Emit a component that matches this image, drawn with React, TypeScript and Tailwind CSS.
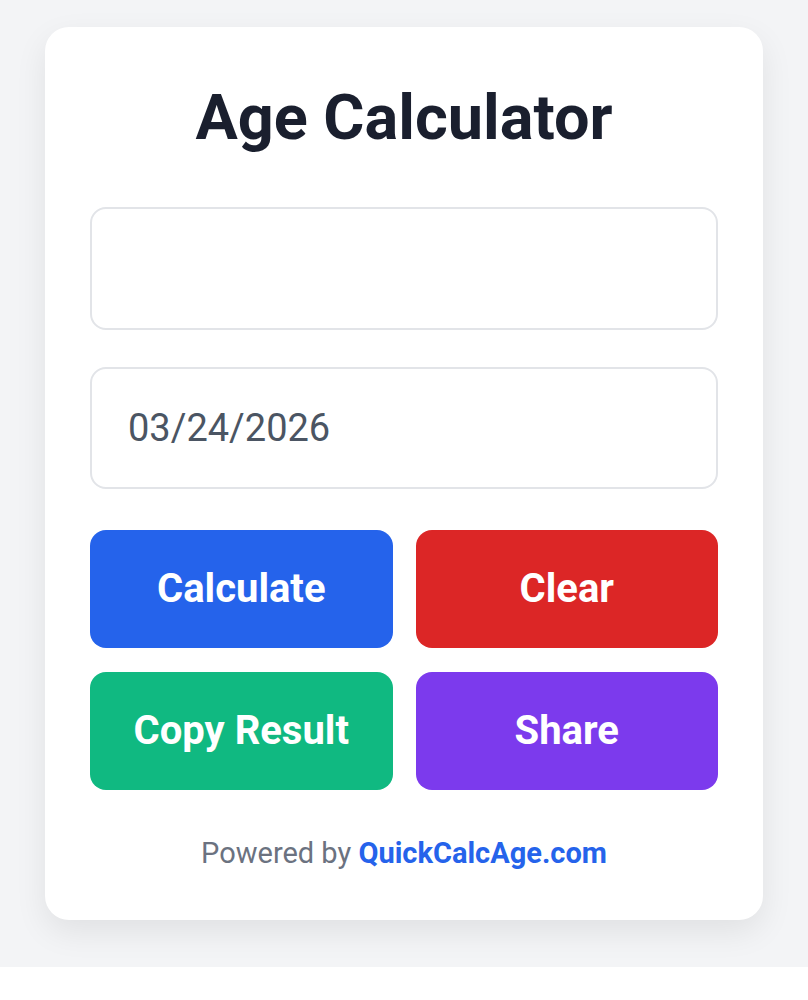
import React from 'react'

const buttons = [
  { label: 'Calculate', cls: 'bg-[#2563eb]' },
  { label: 'Clear', cls: 'bg-[#dc2626]' },
  { label: 'Copy Result', cls: 'bg-[#10b981]' },
  { label: 'Share', cls: 'bg-[#7c3aed]' },
]

export default function App() {
  return (
    <div className="min-h-[1000px] bg-white font-['Roboto','Liberation_Sans',sans-serif]">
      <div className="bg-[#f3f4f6] pt-[27px] pb-[47px]">
        <div className="mx-[45px] w-[718px] rounded-[24px] bg-white px-[45px] pt-[54px] pb-[50px] shadow-[0_12px_32px_rgba(0,0,0,0.08)]">
          <h1 className="text-center text-[63px] font-bold leading-[74px] text-[#1a1f2e]">
            Age Calculator
          </h1>

          <input
            type="text"
            readOnly
            className="mt-[52px] block h-[123px] w-full rounded-[16px] border-2 border-[#e2e4e8] bg-white px-[36px] text-[38px] text-[#4b5563] outline-none"
          />
          <input
            type="text"
            readOnly
            value="03/24/2026"
            className="mt-[37px] block h-[122px] w-full rounded-[16px] border-2 border-[#e2e4e8] bg-white px-[36px] text-[38px] text-[#4b5563] outline-none"
          />

          <div className="mt-[41px] grid grid-cols-2 gap-x-[23px] gap-y-[24px]">
            {buttons.map((b) => (
              <button
                key={b.label}
                className={`h-[118px] rounded-[16px] ${b.cls} text-[40px] font-bold text-white`}
              >
                {b.label}
              </button>
            ))}
          </div>

          <p className="mt-[46px] text-center text-[29px] leading-[34px] text-[#6b7280]">
            Powered by{' '}
            <a href="#" className="font-bold text-[#2563eb]">
              QuickCalcAge.com
            </a>
          </p>
        </div>
      </div>
    </div>
  )
}
